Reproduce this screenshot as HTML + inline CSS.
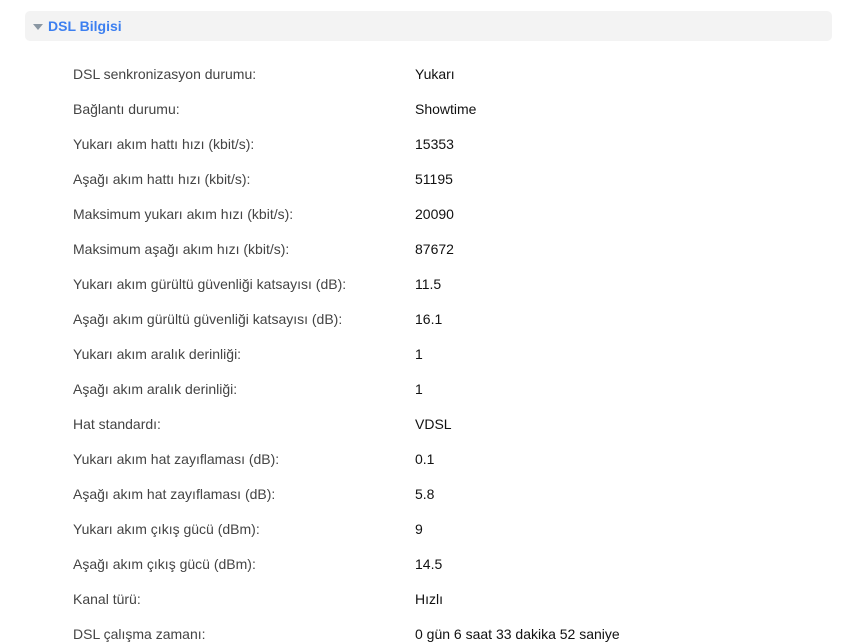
<!DOCTYPE html>
<html><head><meta charset="utf-8"><style>
body{margin:0;background:#fff;font-family:"Liberation Sans",Arial,sans-serif;width:859px;height:643px;overflow:hidden;position:relative}
.hd{position:absolute;left:25px;top:11px;width:807px;height:30px;background:#f3f3f3;border-radius:5px}
.tri{position:absolute;left:8px;top:13px;width:0;height:0;border-left:5px solid transparent;border-right:5px solid transparent;border-top:6px solid #8a97a3}
.ht{position:absolute;left:23px;top:7px;font-size:14px;font-weight:bold;color:#3c7ff0}
.r{position:absolute;font-size:14px;line-height:16px}
.l{left:73px;color:#444}
.v{left:415px;color:#111}
</style></head><body>
<div class="hd"><div class="tri"></div><div class="ht">DSL Bilgisi</div></div>
<div id="c"></div>
<div class="r l" style="top:66px">DSL senkronizasyon durumu:</div><div class="r v" style="top:66px">Yukarı</div>
<div class="r l" style="top:101px">Bağlantı durumu:</div><div class="r v" style="top:101px">Showtime</div>
<div class="r l" style="top:136px">Yukarı akım hattı hızı (kbit/s):</div><div class="r v" style="top:136px">15353</div>
<div class="r l" style="top:171px">Aşağı akım hattı hızı (kbit/s):</div><div class="r v" style="top:171px">51195</div>
<div class="r l" style="top:206px">Maksimum yukarı akım hızı (kbit/s):</div><div class="r v" style="top:206px">20090</div>
<div class="r l" style="top:241px">Maksimum aşağı akım hızı (kbit/s):</div><div class="r v" style="top:241px">87672</div>
<div class="r l" style="top:276px">Yukarı akım gürültü güvenliği katsayısı (dB):</div><div class="r v" style="top:276px">11.5</div>
<div class="r l" style="top:311px">Aşağı akım gürültü güvenliği katsayısı (dB):</div><div class="r v" style="top:311px">16.1</div>
<div class="r l" style="top:346px">Yukarı akım aralık derinliği:</div><div class="r v" style="top:346px">1</div>
<div class="r l" style="top:381px">Aşağı akım aralık derinliği:</div><div class="r v" style="top:381px">1</div>
<div class="r l" style="top:416px">Hat standardı:</div><div class="r v" style="top:416px">VDSL</div>
<div class="r l" style="top:451px">Yukarı akım hat zayıflaması (dB):</div><div class="r v" style="top:451px">0.1</div>
<div class="r l" style="top:486px">Aşağı akım hat zayıflaması (dB):</div><div class="r v" style="top:486px">5.8</div>
<div class="r l" style="top:521px">Yukarı akım çıkış gücü (dBm):</div><div class="r v" style="top:521px">9</div>
<div class="r l" style="top:556px">Aşağı akım çıkış gücü (dBm):</div><div class="r v" style="top:556px">14.5</div>
<div class="r l" style="top:591px">Kanal türü:</div><div class="r v" style="top:591px">Hızlı</div>
<div class="r l" style="top:626px">DSL çalışma zamanı:</div><div class="r v" style="top:626px">0 gün 6 saat 33 dakika 52 saniye</div>
</body></html>
